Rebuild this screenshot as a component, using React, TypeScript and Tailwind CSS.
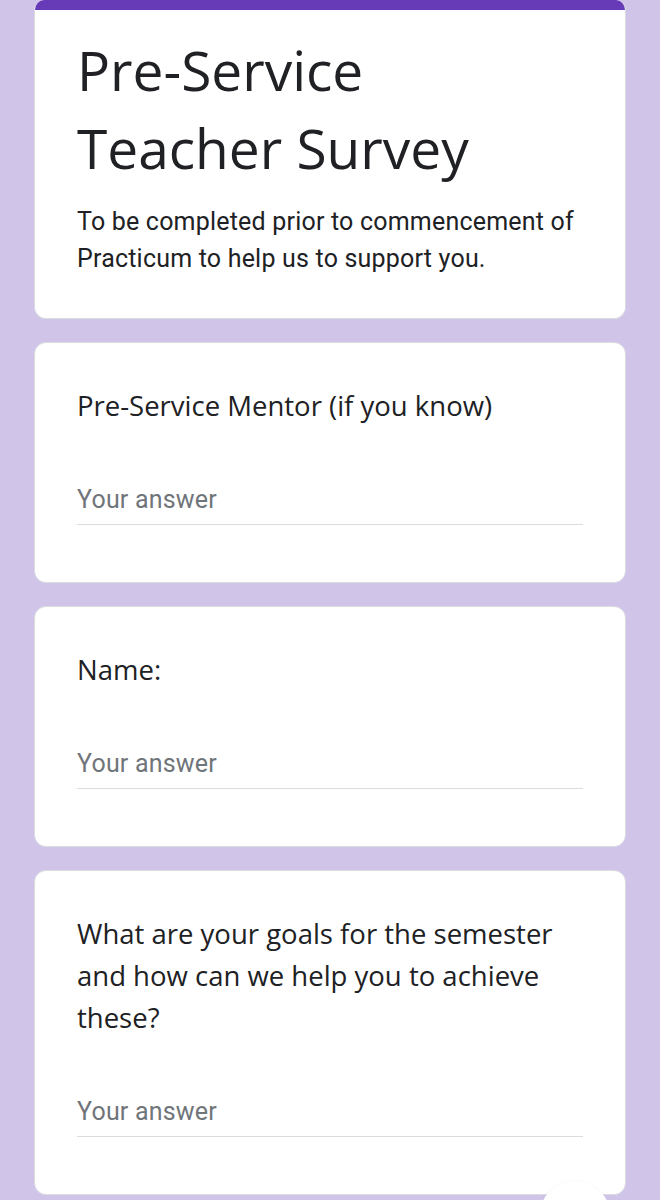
import React from 'react'

const body = { fontFamily: 'Roboto, sans-serif' }
const display = { fontFamily: '"Open Sans", Roboto, sans-serif' }

function Question({ title }: { title: React.ReactNode }) {
  return (
    <div className="rounded-[12px] border border-[#dadce0] bg-white px-[42px] pt-[42px] pb-[57px]">
      <div className="text-[27.5px] leading-[42px] text-[#202124]" style={display}>
        {title}
      </div>
      <div className="mt-[58px] w-[506px] border-b border-[#dadce0] pb-[9px]">
        <div className="text-[25px] leading-[30px] tracking-[0.2px] text-[#70757a]" style={body}>
          Your answer
        </div>
      </div>
    </div>
  )
}

export default function App() {
  return (
    <div className="relative h-[1200px] overflow-hidden bg-[#d1c4e9] px-[34px]" style={body}>
      <div className="flex flex-col gap-[23px]">
        <div className="overflow-hidden rounded-b-[12px] rounded-t-[10px] border border-t-0 border-[#dadce0] bg-white">
          <div className="h-[10px] bg-[#673ab7]" />
          <div className="px-[42px] pt-[21px] pb-[41px]">
            <h1 className="text-[55px] leading-[78px] text-[#202124]" style={display}>
              Pre-Service
              <br />
              Teacher Survey
            </h1>
            <p className="mt-[16px] text-[25px] leading-[37px] tracking-[0.2px] text-[#202124]">
              To be completed prior to commencement of Practicum to help us to support you.
            </p>
          </div>
        </div>

        <Question title="Pre-Service Mentor (if you know)" />
        <Question title="Name:" />
        <Question title="What are your goals for the semester and how can we help you to achieve these?" />
      </div>

      <div className="absolute left-[539px] top-[1181px] h-[72px] w-[72px] rounded-full bg-white shadow-sm" />
    </div>
  )
}
